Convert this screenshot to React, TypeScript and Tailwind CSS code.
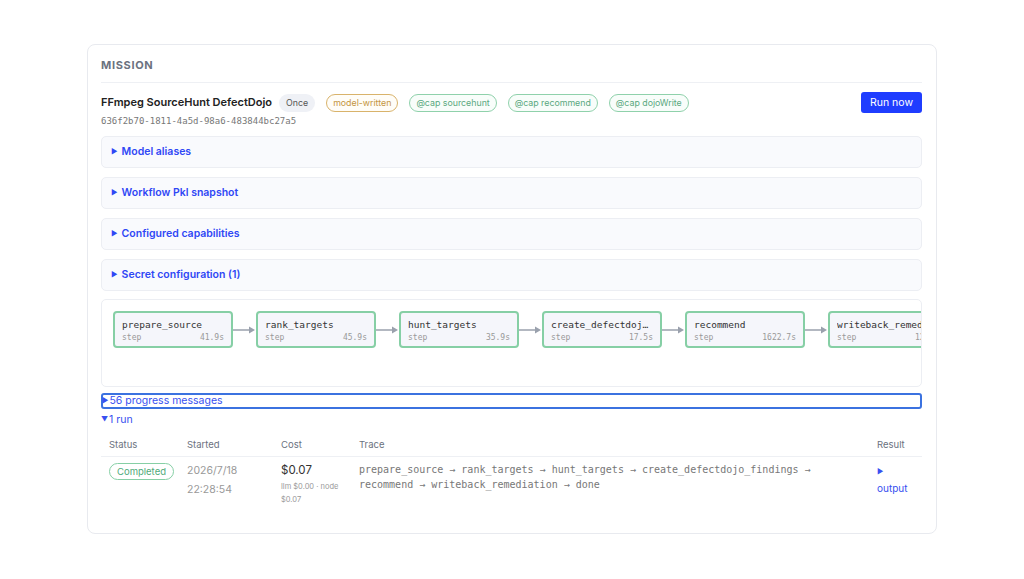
import React from 'react';

const sans = { fontFamily: 'Inter, "Noto Sans", sans-serif' };
const mono = { fontFamily: '"DejaVu Sans Mono", "Liberation Mono", monospace' };

const caps = ['@cap sourcehunt', '@cap recommend', '@cap dojoWrite'];
const sections = ['Model aliases', 'Workflow Pkl snapshot', 'Configured capabilities', 'Secret configuration (1)'];
const nodes = [
  { name: 'prepare_source', time: '41.9s' },
  { name: 'rank_targets', time: '45.9s' },
  { name: 'hunt_targets', time: '35.9s' },
  { name: 'create_defectdojo_findings', time: '17.5s' },
  { name: 'recommend', time: '1622.7s' },
  { name: 'writeback_remediation', time: '12.1s' },
];

function Arrow() {
  return (
    <svg width="23" height="10" viewBox="0 0 23 10" className="shrink-0">
      <line x1="0" y1="5" x2="17" y2="5" stroke="#9aa1ad" strokeWidth="1.3" />
      <path d="M16 1.5 L22 5 L16 8.5 Z" fill="#9aa1ad" />
    </svg>
  );
}

function Node({ name, time }: { name: string; time: string }) {
  return (
    <div className="w-[120px] h-[37px] shrink-0 rounded-[4px] border-2 border-[#86cfa5] bg-[#f5f6fb] px-[7px] pt-[5px]">
      <div className="text-[9.5px] leading-[13px] text-[#333] truncate" style={mono}>{name}</div>
      <div className="flex justify-between text-[8px] leading-[13px] text-[#999]" style={mono}>
        <span>step</span>
        <span>{time}</span>
      </div>
    </div>
  );
}

export default function App() {
  return (
    <div className="w-[1024px] h-[579px] bg-white pt-[44px] pl-[87px]" style={sans}>
      <div className="w-[850px] h-[490px] rounded-[8px] border border-[#e8eaef] bg-white pl-[13px] pr-[14px] pt-[13px]">
        <div className="pb-[10px] border-b border-[#eef0f4] text-[11px] leading-[14px] font-bold tracking-[0.06em] text-[#6b7280]">MISSION</div>

        <div className="flex items-center justify-between mt-[9px] h-[21px]">
          <div className="flex items-center">
            <span className="text-[11px] font-semibold text-[#222] mr-[7px]">FFmpeg SourceHunt DefectDojo</span>
            <span className="h-[18px] px-[7px] rounded-full bg-[#eff1f6] text-[8.8px] leading-[18px] text-[#555] mr-[11px]">Once</span>
            <span className="h-[18px] px-[6px] rounded-full border border-[#d9b36b] bg-[#fffdf8] text-[8.8px] leading-[16px] text-[#c4953f] mr-[11px]">model-written</span>
            {caps.map((c) => (
              <span key={c} className="h-[18px] px-[6px] rounded-full border border-[#8fd1ab] bg-[#f8fdfa] text-[8.8px] leading-[16px] text-[#5aa880] mr-[11px]">{c}</span>
            ))}
          </div>
          <button className="h-[21px] w-[61px] rounded-[3px] bg-[#1f3dff] text-white text-[10.5px]">Run now</button>
        </div>
        <div className="mt-[2px] text-[9px] leading-[12px] text-[#777]" style={mono}>636f2b70-1811-4a5d-98a6-483844bc27a5</div>

        <div className="mt-[9px] flex flex-col gap-[9px]">
          {sections.map((s) => (
            <div key={s} className="h-[32px] rounded-[5px] border border-[#eceef3] bg-[#f9fafd] flex items-center pl-[9px] text-[10.5px] font-semibold text-[#2f47f5]">
              <span className="text-[7px] mr-[4px]">▶</span>{s}
            </div>
          ))}
        </div>

        <div className="mt-[8px] h-[88px] rounded-[5px] border border-[#eceef3] bg-white overflow-hidden pt-[11px] pl-[11px]">
          <div className="flex items-center">
            {nodes.map((n, i) => (
              <React.Fragment key={n.name}>
                {i > 0 && <Arrow />}
                <Node name={n.name} time={n.time} />
              </React.Fragment>
            ))}
          </div>
        </div>

        <div className="mt-[6px] h-[16px] rounded-[3px] border-2 border-[#3b72e0] flex items-center text-[10.5px] text-[#3850f0]">
          <span className="text-[7px] mr-[1px] -ml-[1px]">▶</span>56 progress messages
        </div>
        <div className="mt-[4px] text-[10.5px] leading-[14px] text-[#3850f0] flex items-center">
          <span className="text-[7px] mr-[1px]">▼</span>1 run
        </div>

        <div className="mt-[11px] grid grid-cols-[79px_93px_78px_1fr_53px] text-[9.5px] leading-[14px] text-[#6b7280] border-b border-[#eef0f4] h-[19px]">
          <div className="pl-[8px]">Status</div>
          <div className="pl-[7px]">Started</div>
          <div className="pl-[8px]">Cost</div>
          <div className="pl-[8px]">Trace</div>
          <div className="pl-[8px]">Result</div>
        </div>
        <div className="grid grid-cols-[79px_93px_78px_1fr_53px] pt-[4px]">
          <div className="pl-[8px] pt-[2px]">
            <div className="w-fit h-[17px] px-[7px] rounded-full border border-[#86cfa5] text-[9.5px] leading-[15px] text-[#4fa97a]">Completed</div>
          </div>
          <div className="pl-[7px] text-[10.5px] leading-[19px] text-[#999]">
            <div>2026/7/18</div>
            <div>22:28:54</div>
          </div>
          <div className="pl-[8px]">
            <div className="text-[11.5px] leading-[19px] text-[#333]">$0.07</div>
            <div className="text-[7.5px] leading-[13px] text-[#999]">llm $0.00 · node<br />$0.07</div>
          </div>
          <div className="pl-[8px] text-[10px] leading-[15px] text-[#777] pt-[1px]" style={mono}>
            <div>prepare_source → rank_targets → hunt_targets → create_defectdojo_findings →</div>
            <div>recommend → writeback_remediation → done</div>
          </div>
          <div className="pl-[8px] text-[10px] leading-[16px] text-[#3850f0] pt-[3px]">
            <div className="text-[7px]">▶</div>
            <div>output</div>
          </div>
        </div>
      </div>
    </div>
  );
}
